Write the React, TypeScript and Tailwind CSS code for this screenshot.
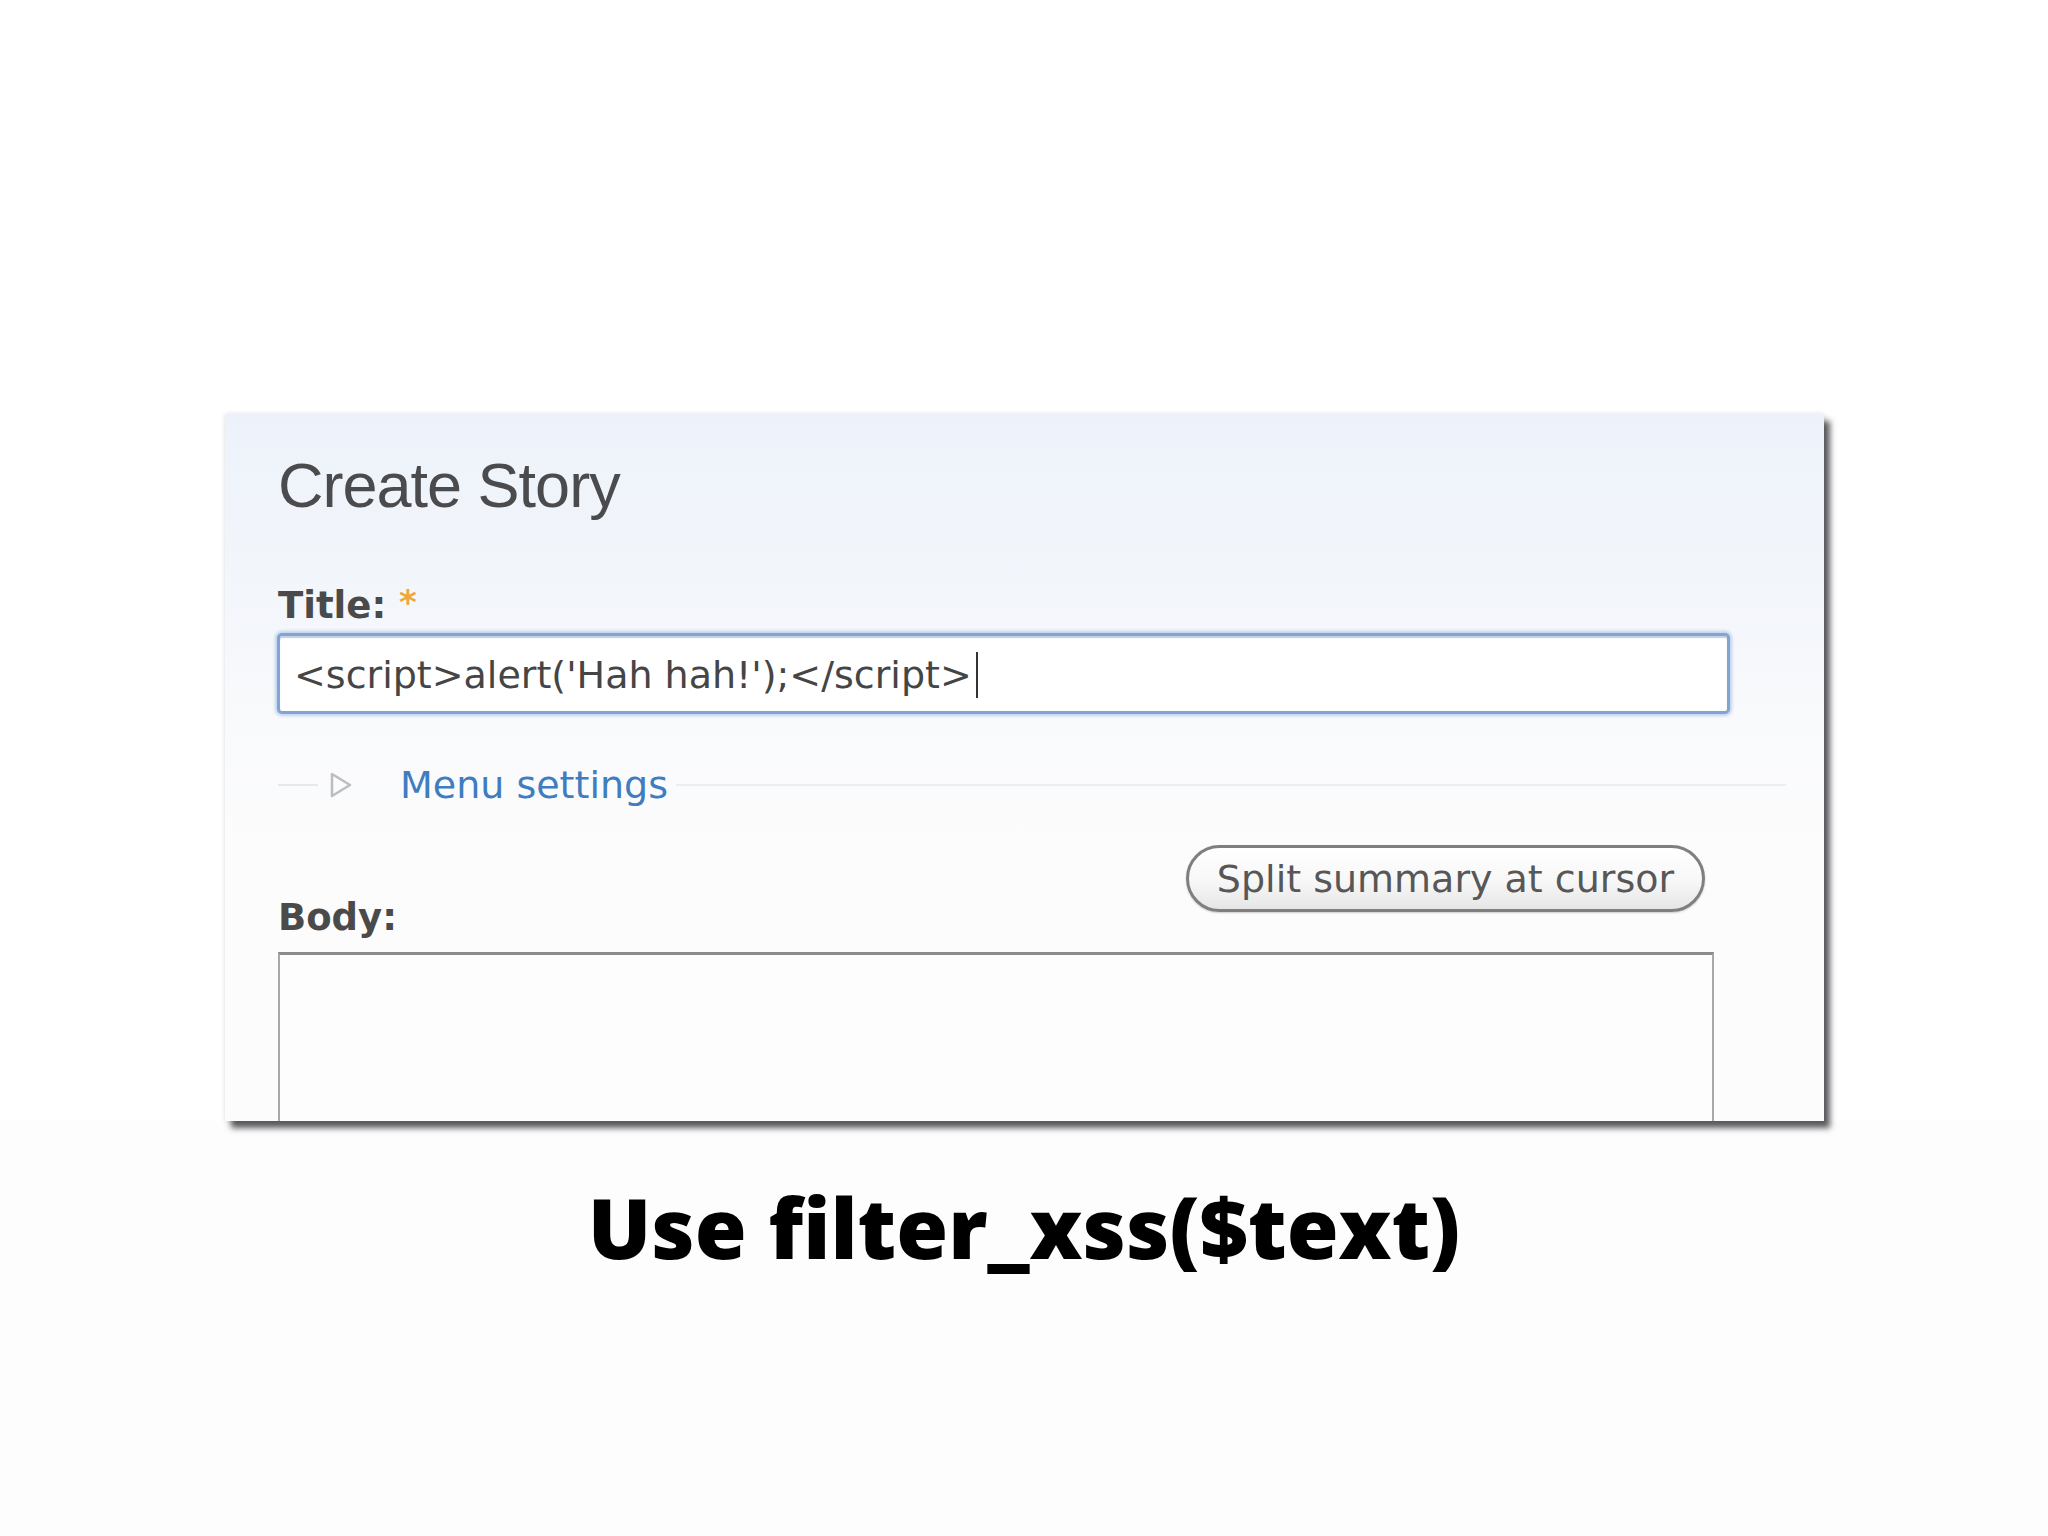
import React from "react";

export default function App() {
  const ui = { fontFamily: '"DejaVu Sans", Verdana, sans-serif' };
  return (
    <div className="w-[2048px] h-[1536px] bg-white flex flex-col overflow-hidden">
      <div className="pt-[414px]">
        <div
          className="relative z-10 ml-[225px] w-[1599px] h-[707px] overflow-hidden bg-[linear-gradient(180deg,#edf2fa_0%,#f3f6fb_25%,#f9fafc_45%,#fcfcfd_60%,#fcfcfc_100%)] shadow-[6px_7px_6px_rgba(45,45,50,0.78),0_0_5px_rgba(0,0,0,0.12)]"
        >
          <div className="pl-[53px] pt-[40px]" style={ui}>
            <h1
              className="text-[63px] leading-none tracking-[-1px] text-[#4b4b4d] m-0"
              style={{ fontFamily: '"Liberation Sans", Arial, sans-serif' }}
            >
              Create Story
            </h1>

            <div className="mt-[68px] text-[37px] leading-none font-bold text-[#4a4a4a]">
              Title: <span className="text-[#eea73a] text-[34px] align-[4px]">*</span>
            </div>

            <div className="mt-[9px] -ml-[1px] w-[1453px] h-[81px] rounded-[5px] border-[3px] border-[#82a4d2] bg-white shadow-[0_0_3px_2px_rgba(140,175,220,0.5),inset_0_2px_1px_rgba(90,120,160,0.35)] pl-[14px] pt-[20px]">
              <div className="flex items-start text-[38px] leading-none text-[#454545] whitespace-nowrap">
                <span>{"<script>alert('Hah hah!');</script>"}</span>
                <span className="ml-[4px] -mt-[4px] w-[2px] h-[46px] bg-[#333]" />
              </div>
            </div>

            <div className="mt-[52px] flex items-center h-[38px]">
              <div className="w-[40px] h-[2px] bg-[#e6e8ea]" />
              <svg className="ml-[10px]" width="26" height="28" viewBox="0 0 26 28">
                <path d="M4 3 L22 14 L4 25 Z" fill="none" stroke="#bdbdbd" strokeWidth="2.5" strokeLinejoin="round" />
              </svg>
              <span className="ml-[46px] text-[38px] leading-none text-[#3f7dbf]">Menu settings</span>
              <div className="ml-[8px] w-[1110px] h-[2px] bg-[#eceef0]" />
            </div>

            <div className="mt-[41px] w-[1427px] flex justify-between items-start">
              <div className="mt-[54px] text-[37px] leading-none font-bold text-[#4a4a4a]">Body:</div>
              <div className="w-[519px] h-[67px] rounded-full border-[3px] border-[#7f7f7f] bg-[linear-gradient(180deg,#ffffff_0%,#f7f7f7_55%,#e6e6e6_100%)] shadow-[inset_0_1px_0_#fff,0_1px_2px_rgba(0,0,0,0.2)] flex items-center justify-center">
                <span className="text-[38px] leading-none text-[#575757] whitespace-nowrap">Split summary at cursor</span>
              </div>
            </div>

            <div className="mt-[16px] w-[1436px] h-[300px] border-x-[2px] border-t-[3px] border-x-[#a9a9a9] border-t-[#8c8c8c] bg-[#fdfdfd]" />
          </div>
        </div>
      </div>

      <div className="flex-1 bg-[#fdfdfd] flex justify-center pt-[64px]">
        <div
          className="text-[84px] leading-none font-extrabold text-black whitespace-nowrap"
          style={{ fontFamily: '"Open Sans", sans-serif' }}
        >
          Use filter_xss($text)
        </div>
      </div>
    </div>
  );
}
